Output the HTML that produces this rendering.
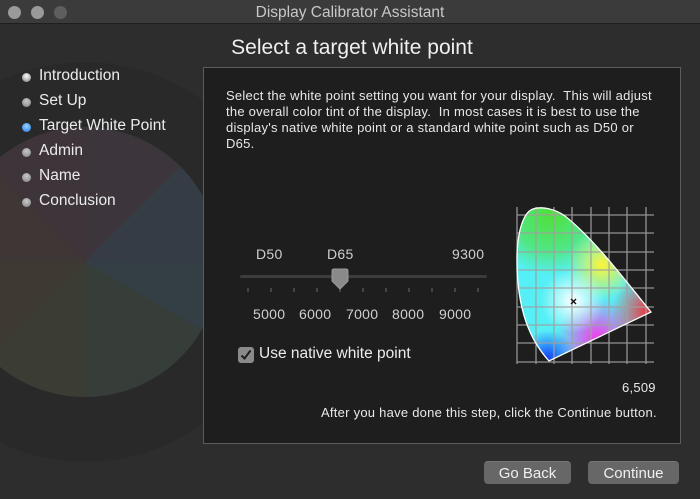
<!DOCTYPE html>
<html><head><meta charset="utf-8"><style>
*{margin:0;padding:0;box-sizing:border-box}
body{width:700px;height:499px;overflow:hidden;background:#2d2d2d;font-family:"Liberation Sans",sans-serif;color:#e6e6e6;position:relative}
.tb{position:absolute;left:0;top:0;width:700px;height:24px;background:#3b3b3b;border-bottom:1px solid #1f1f1f}
.dot{position:absolute;top:6px;width:13px;height:13px;border-radius:50%}
.title{position:absolute;top:4px;left:0;width:700px;text-align:center;font-size:15.5px;color:#c8c8c8}
.wheel{position:absolute;left:-115px;top:62px;width:400px;height:400px;border-radius:50%;background:rgba(0,0,0,0.08)}
.wheel2{position:absolute;left:-50px;top:127px;width:270px;height:270px;border-radius:50%;
background:conic-gradient(from 0deg,#3f383f 0deg 45deg,#37404a 45deg 90deg,#36424a 90deg 120deg,#38413c 120deg 180deg,#3e4036 180deg 225deg,#433c36 225deg 270deg,#433939 270deg 315deg,#41363c 315deg 360deg);opacity:.85}
h1{position:absolute;top:36px;left:0;width:704px;text-align:center;font-size:21px;font-weight:normal;color:#f0f0f0}
.nav{position:absolute;left:21px;font-size:15.5px;color:#ececec}
.nav i{position:absolute;left:1px;top:4px;width:9px;height:9px;border-radius:50%;background:radial-gradient(circle at 50% 35%,#c8c8c8,#808080)}
.nav span{position:absolute;left:18px;top:-2px;white-space:nowrap}
.panel{position:absolute;left:203px;top:67px;width:478px;height:377px;background:#1e1e1e;border:1px solid #5c5c5c}
.txt{position:absolute;left:22px;top:20px;font-size:13px;letter-spacing:.25px;line-height:16px;color:#e8e8e8;white-space:nowrap}
.s{position:absolute;font-size:13px;letter-spacing:.25px;color:#cfcfcf;white-space:nowrap}
.n{font-size:14px;letter-spacing:.3px}
.btn{position:absolute;top:461px;height:23px;background:#676767;border-radius:4px;font-size:15px;color:#f0f0f0;text-align:center;line-height:23px;border-top:1px solid #777}
</style></head><body>
<div class="wheel"></div><div class="wheel2"></div>
<div class="tb">
<div class="dot" style="left:8px;background:#9a9a9a"></div>
<div class="dot" style="left:31px;background:#9a9a9a"></div>
<div class="dot" style="left:54px;background:#5e5e5e"></div>
<div class="title">Display Calibrator Assistant</div>
</div>
<h1>Select a target white point</h1>
<div class="nav" style="top:69px"><i style="background:radial-gradient(circle at 50% 35%,#fff,#777)"></i><span>Introduction</span></div>
<div class="nav" style="top:94px"><i></i><span>Set Up</span></div>
<div class="nav" style="top:119px"><i style="background:radial-gradient(circle at 50% 35%,#9cd2ff,#1e78e6)"></i><span>Target White Point</span></div>
<div class="nav" style="top:144px"><i></i><span>Admin</span></div>
<div class="nav" style="top:169px"><i></i><span>Name</span></div>
<div class="nav" style="top:194px"><i></i><span>Conclusion</span></div>
<div class="panel">
<div class="txt">Select the white point setting you want for your display.&nbsp; This will adjust<br>the overall color tint of the display.&nbsp; In most cases it is best to use the<br>display's native white point or a standard white point such as D50 or<br>D65.</div>
</div>
<div class="s n" style="left:256px;top:246px">D50</div>
<div class="s n" style="left:327px;top:246px">D65</div>
<div class="s n" style="left:452px;top:246px">9300</div>
<div style="position:absolute;left:240px;top:275px;width:247px;height:3px;background:#3c3c3c;border-radius:2px"></div>
<svg style="position:absolute;left:220px;top:265px" width="280" height="40">
<g stroke="#6a6a6a" stroke-width="1">
<line x1="28" y1="23" x2="28" y2="27"/><line x1="51" y1="23" x2="51" y2="27"/><line x1="74" y1="23" x2="74" y2="27"/><line x1="97" y1="23" x2="97" y2="27"/><line x1="120" y1="23" x2="120" y2="27"/><line x1="143" y1="23" x2="143" y2="27"/><line x1="166" y1="23" x2="166" y2="27"/><line x1="189" y1="23" x2="189" y2="27"/><line x1="212" y1="23" x2="212" y2="27"/><line x1="235" y1="23" x2="235" y2="27"/><line x1="258" y1="23" x2="258" y2="27"/></g>
<path d="M112 6 Q112 4 114 4 L126 4 Q128 4 128 6 L128 16 L120 24 L112 16 Z" fill="#8a8a8a" stroke="#9a9a9a"/>
</svg>
<div class="s n" style="left:253px;top:306px">5000</div>
<div class="s n" style="left:299px;top:306px">6000</div>
<div class="s n" style="left:346px;top:306px">7000</div>
<div class="s n" style="left:392px;top:306px">8000</div>
<div class="s n" style="left:439px;top:306px">9000</div>
<div style="position:absolute;left:238px;top:347px;width:16px;height:16px;background:#8a8a8a;border-radius:3px"></div>
<svg style="position:absolute;left:238px;top:347px" width="16" height="16"><path d="M3.5 8.5 L6.5 11.5 L12.5 3.5" stroke="#1e1e1e" stroke-width="2" fill="none"/></svg>
<div style="position:absolute;left:259px;top:345px;font-size:15.5px;color:#ececec">Use native white point</div>
<svg style="position:absolute;left:510px;top:200px" width="150" height="170">
<defs>
<clipPath id="g"><path d="M23 9 C14 12 7 30 7 60 C7 110 20 140 39 161 L141 112 C115 80 85 40 55 16 C45 9 32 6 23 9 Z"/></clipPath>
<radialGradient id="w" cx="63" cy="101" r="32" gradientUnits="userSpaceOnUse"><stop offset="0" stop-color="#fff"/><stop offset="1" stop-color="#fff" stop-opacity="0"/></radialGradient>
<radialGradient id="gr" cx="40" cy="15" r="60" gradientUnits="userSpaceOnUse"><stop offset="0" stop-color="#4ee03a"/><stop offset=".6" stop-color="#4ee03a" stop-opacity=".6"/><stop offset="1" stop-color="#4ee03a" stop-opacity="0"/></radialGradient>
<radialGradient id="ye" cx="92" cy="65" r="35" gradientUnits="userSpaceOnUse"><stop offset="0" stop-color="#fff535"/><stop offset="1" stop-color="#fff535" stop-opacity="0"/></radialGradient>
<radialGradient id="re" cx="141" cy="112" r="40" gradientUnits="userSpaceOnUse"><stop offset="0" stop-color="#ff2030"/><stop offset="1" stop-color="#ff2030" stop-opacity="0"/></radialGradient>
<radialGradient id="ma" cx="88" cy="140" r="42" gradientUnits="userSpaceOnUse"><stop offset="0" stop-color="#ff30e8"/><stop offset="1" stop-color="#ff30e8" stop-opacity="0"/></radialGradient>
<radialGradient id="bl" cx="38" cy="158" r="28" gradientUnits="userSpaceOnUse"><stop offset="0" stop-color="#1040ff"/><stop offset="1" stop-color="#1040ff" stop-opacity="0"/></radialGradient>
</defs>
<g clip-path="url(#g)">
<rect width="150" height="170" fill="#55f0f5"/>
<rect width="150" height="170" fill="url(#gr)"/>
<rect width="150" height="170" fill="url(#ye)"/>
<rect width="150" height="170" fill="url(#ma)"/>
<rect width="150" height="170" fill="url(#re)"/>
<rect width="150" height="170" fill="url(#bl)"/>
<rect width="150" height="170" fill="url(#w)"/>
</g>
<g stroke="#a0a0a0" stroke-width="1.3" opacity=".9">
<line x1="7" y1="7" x2="7" y2="164"/><line x1="26" y1="7" x2="26" y2="164"/><line x1="44" y1="7" x2="44" y2="164"/><line x1="62" y1="7" x2="62" y2="164"/><line x1="81" y1="7" x2="81" y2="164"/><line x1="99" y1="7" x2="99" y2="164"/><line x1="117" y1="7" x2="117" y2="164"/><line x1="136" y1="7" x2="136" y2="164"/>
<line x1="7" y1="15" x2="144" y2="15"/><line x1="7" y1="33" x2="144" y2="33"/><line x1="7" y1="52" x2="144" y2="52"/><line x1="7" y1="70" x2="144" y2="70"/><line x1="7" y1="88" x2="144" y2="88"/><line x1="7" y1="107" x2="144" y2="107"/><line x1="7" y1="125" x2="144" y2="125"/><line x1="7" y1="143" x2="144" y2="143"/><line x1="7" y1="162" x2="144" y2="162"/>
</g>
<path d="M23 9 C14 12 7 30 7 60 C7 110 20 140 39 161 L141 112 C115 80 85 40 55 16 C45 9 32 6 23 9 Z" fill="none" stroke="#fff" stroke-width="1.3"/>
<path d="M61 99 L66 104 M66 99 L61 104" stroke="#111" stroke-width="1.4"/>
</svg>
<div class="s" style="left:622px;top:380px;color:#e8e8e8">6,509</div>
<div class="s" style="left:321px;top:405px;color:#e8e8e8">After you have done this step, click the Continue button.</div>
<div class="btn" style="left:484px;width:87px">Go Back</div>
<div class="btn" style="left:588px;width:91px">Continue</div>
</body></html>
